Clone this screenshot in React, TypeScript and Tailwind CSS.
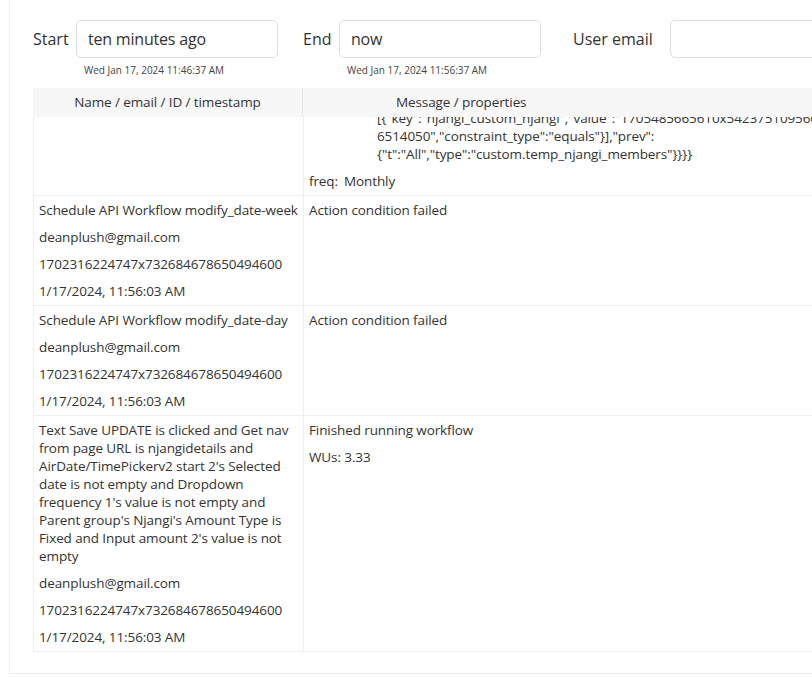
import React from "react";

type LogRow = {
  lines: string[];
  message: string[];
};

const rows: LogRow[] = [
  {
    lines: [
      "Schedule API Workflow modify_date-week",
      "deanplush@gmail.com",
      "1702316224747x732684678650494600",
      "1/17/2024, 11:56:03 AM",
    ],
    message: ["Action condition failed"],
  },
  {
    lines: [
      "Schedule API Workflow modify_date-day",
      "deanplush@gmail.com",
      "1702316224747x732684678650494600",
      "1/17/2024, 11:56:03 AM",
    ],
    message: ["Action condition failed"],
  },
  {
    lines: [
      "Text Save UPDATE is clicked and Get nav from page URL is njangidetails and AirDate/TimePickerv2 start 2's Selected date is not empty and Dropdown frequency 1's value is not empty and Parent group's Njangi's Amount Type is Fixed and Input amount 2's value is not empty",
      "deanplush@gmail.com",
      "1702316224747x732684678650494600",
      "1/17/2024, 11:56:03 AM",
    ],
    message: ["Finished running workflow", "WUs: 3.33"],
  },
];

function DateField({
  label,
  labelWidth,
  value,
  hint,
  className,
}: {
  label: string;
  labelWidth: string;
  value: string;
  hint: string;
  className?: string;
}) {
  return (
    <div className={`flex items-start ${className ?? ""}`}>
      <span className={`mr-[8px] whitespace-nowrap text-[16px] leading-[38px] ${labelWidth}`}>{label}</span>
      <div className="flex flex-col">
        <div className="flex h-[38px] w-[202px] items-center rounded-[5px] border border-[#dedede] px-[11px] text-[16px] tracking-[-0.2px]">
          {value}
        </div>
        <span className="mt-[5px] pl-[8px] text-[10px] leading-[14px] text-[#444]">{hint}</span>
      </div>
    </div>
  );
}

export default function App() {
  return (
    <div className="h-[677px] w-full overflow-hidden bg-white font-['Open_Sans',sans-serif] text-[#333]">
      <div className="ml-[9px] w-[1100px] border-b border-l border-[#ececec] pb-[21px] pl-[23px] pt-[20px]">
        {/* filters */}
        <div className="flex items-start">
          <DateField label="Start" labelWidth="w-[35px]" value="ten minutes ago" hint="Wed Jan 17, 2024 11:46:37 AM" />
          <DateField
            label="End"
            labelWidth="w-[28px]"
            value="now"
            hint="Wed Jan 17, 2024 11:56:37 AM"
            className="ml-[25px]"
          />
          <div className="ml-[32px] flex items-start">
            <span className="w-[97px] whitespace-nowrap text-[16px] leading-[38px]">User email</span>
            <div className="h-[38px] w-[260px] rounded-[5px] border border-[#dedede]" />
          </div>
        </div>

        {/* table */}
        <div className="mt-[11px] w-[1000px] text-[13.5px] leading-[18px] tracking-[-0.1px]">
          <div className="flex h-[29px] bg-[#f7f7f7] leading-[29px]">
            <div className="w-[270px] border-r border-[#e4e4e4] text-center">Name / email / ID / timestamp</div>
            <div className="flex-1 pl-[93px]">Message / properties</div>
          </div>

          <div className="border-l border-[#eeeeee]">
            {/* first row, scrolled partly out of view */}
            <div className="flex h-[79px] overflow-hidden border-b border-[#eeeeee]">
              <div className="w-[270px] border-r border-[#eeeeee]" />
              <div className="flex-1 px-[5px]">
                <div className="-mt-[8px] whitespace-nowrap pl-[68px]">
                  <div>[{"{"}"key":"njangi_custom_njangi","value":"1705485665610x542375109566514050</div>
                  <div>6514050","constraint_type":"equals"{"}"}],"prev":</div>
                  <div>{"{"}"t":"All","type":"custom.temp_njangi_members"{"}}}}"}</div>
                </div>
                <div className="mt-[9px]">
                  <span>freq:</span>
                  <span className="ml-[6px]">Monthly</span>
                </div>
              </div>
            </div>

            {rows.map((row, i) => (
              <div key={i} className="flex border-b border-[#eeeeee]">
                <div className="flex w-[270px] flex-col gap-[9px] border-r border-[#eeeeee] py-[5px] pl-[5px]">
                  {row.lines.map((line, j) => (
                    <div key={j}>{line}</div>
                  ))}
                </div>
                <div className="flex flex-1 flex-col gap-[9px] px-[5px] py-[5px]">
                  {row.message.map((m, j) => (
                    <div key={j}>{m}</div>
                  ))}
                </div>
              </div>
            ))}
          </div>
        </div>
      </div>
    </div>
  );
}
